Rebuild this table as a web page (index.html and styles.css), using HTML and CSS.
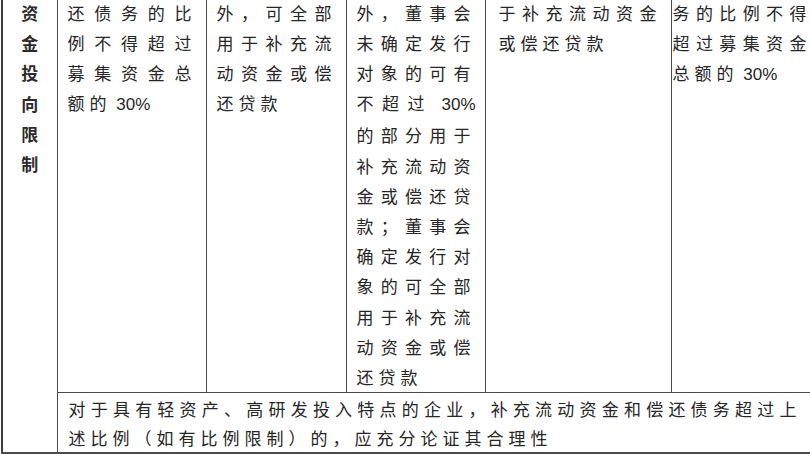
FILE: index.html
```html
<!DOCTYPE html>
<html lang="zh-CN">
<head>
<meta charset="utf-8">
<title>资金投向限制</title>
<link rel="stylesheet" href="styles.css">
</head>
<body>
<table class="rules">
  <colgroup>
    <col class="c-head">
    <col class="c-a">
    <col class="c-b">
    <col class="c-c">
    <col class="c-d">
    <col class="c-e">
  </colgroup>
  <tbody>
    <tr class="row-main">
      <th class="label" rowspan="2">资<br>金<br>投<br>向<br>限<br>制</th>
      <td class="cell">还债务的比例不得超过募集资金总额的<span class="num"> 30%</span></td>
      <td class="cell">外，可全部用于补充流动资金或偿还贷款</td>
      <td class="cell">外，董事会未确定发行对象的可有不超过<span class="num"> 30%</span>的部分用于补充流动资金或偿还贷款；董事会确定发行对象的可全部用于补充流动资金或偿还贷款</td>
      <td class="cell cell-wide">于补充流动资金或偿还贷款</td>
      <td class="cell cell-edge">务的比例不得超过募集资金总额的<span class="num"> 30%</span></td>
    </tr>
    <tr class="row-note">
      <td class="note" colspan="5">对于具有轻资产、高研发投入特点的企业，补充流动资金和偿还债务超过上述比例（如有比例限制）的，应充分论证其合理性</td>
    </tr>
  </tbody>
</table>
</body>
</html>
```

FILE: styles.css
```css
html, body {
  margin: 0;
  padding: 0;
  background: #ffffff;
  overflow: hidden;
}

body {
  width: 810px;
  height: 454px;
}

.rules {
  table-layout: fixed;
  border-collapse: collapse;
  width: 815px;
  margin: -3px 0 0 1px;
  font-family: "Noto Sans CJK SC", "Liberation Sans", sans-serif;
  font-size: 17px;
  color: #262626;
  border-left: 2px solid #3c3c3c;
  border-bottom: 2px solid #4a4a4a;
}

.c-head { width: 55px; }
.c-a { width: 149px; }
.c-b { width: 140px; }
.c-c { width: 139px; }
.c-d { width: 186px; }
.c-e { width: 146px; }

.rules th,
.rules td {
  border: 1px solid #4a4a4a;
  vertical-align: top;
}

.row-main td {
  border-top: none;
}

.label {
  border-top: none;
  padding: 0;
  font-weight: 700;
  text-align: center;
  line-height: 30.2px;
  color: #2b2b2b;
}

.cell {
  padding: 0 9px 0 10px;
  line-height: 30.2px;
  letter-spacing: 5px;
  text-align: justify;
  word-break: break-all;
}

.cell-wide {
  padding-left: 13px;
}

.cell-edge {
  padding-left: 1px;
  padding-right: 5px;
}

.num {
  font-family: "Liberation Sans", "Noto Sans CJK SC", sans-serif;
  letter-spacing: 0;
}

.note {
  padding: 1px 15px 0 11px;
  line-height: 29px;
  letter-spacing: 5px;
  text-align: justify;
}
```
